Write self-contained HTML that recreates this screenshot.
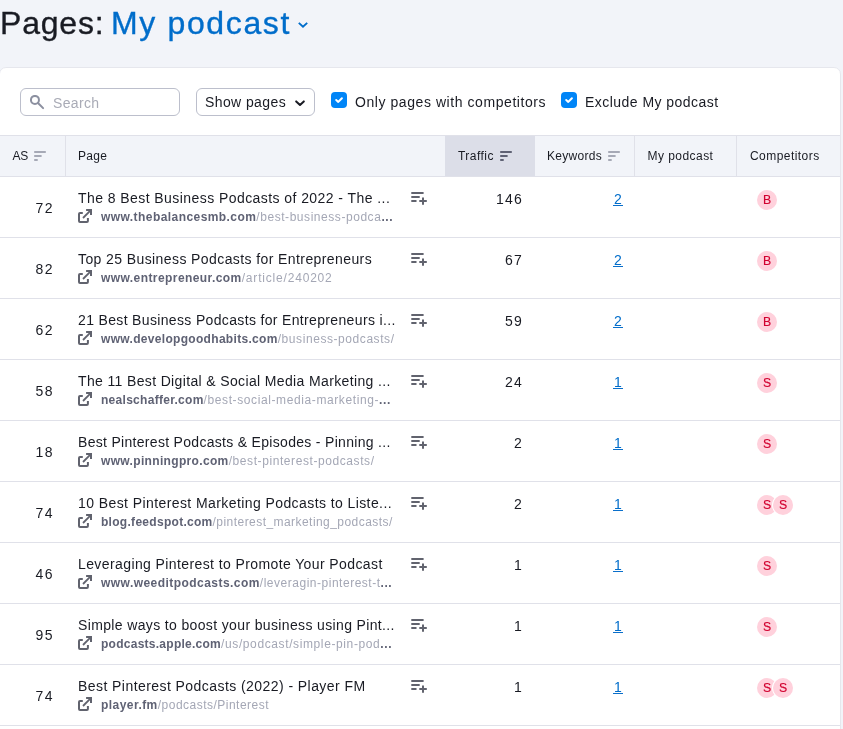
<!DOCTYPE html>
<html lang="en">
<head>
<meta charset="utf-8">
<title>Pages: My podcast</title>
<style>
*{box-sizing:border-box;margin:0;padding:0}
html,body{width:843px;height:729px;overflow:hidden}
body{will-change:transform;background:#f2f4f9;font-family:"Liberation Sans",Arial,sans-serif;color:#191b23;position:relative}
.title{position:absolute;left:0;top:0;height:50px;width:843px;font-weight:400;font-size:32px;line-height:36px;white-space:nowrap;-webkit-text-stroke:.35px}
.title .t1{position:absolute;left:0;top:5px;letter-spacing:.8px}
.title .t2{position:absolute;left:111px;top:5px;color:#006dca;letter-spacing:1.64px}
.title svg{position:absolute;left:298px;top:22px;overflow:visible}
.card{position:absolute;left:-1px;top:67px;width:842px;height:700px;background:#fff;border:1px solid #e6e7ed;border-radius:7px 7px 0 0}
.search{position:absolute;left:20px;top:20px;width:160px;height:28px;border:1px solid #bcbfcc;border-radius:6px;background:#fff}
.search svg{position:absolute;left:9px;top:6px}
.search span{position:absolute;left:32px;top:5px;font-size:14px;line-height:18px;color:#a9abb6;letter-spacing:.35px}
.select{position:absolute;left:196px;top:20px;width:119px;height:28px;border:1px solid #bcbfcc;border-radius:6px;background:#fff}
.select span{position:absolute;left:8px;top:4px;font-size:14px;line-height:18px;letter-spacing:.4px;white-space:nowrap}
.select svg{position:absolute;left:97px;top:11px}
.cb{position:absolute;top:24px;width:16px;height:16px;border-radius:4px;background:#0085f7}
.cb svg{position:absolute;left:3px;top:4px}
.lbl{position:absolute;top:25px;font-size:14px;line-height:18px;white-space:nowrap;letter-spacing:.4px}
.thead{position:absolute;left:0;top:67px;width:840px;height:42px;background:#f2f4f9;border-top:1px solid #e0e1e9;border-bottom:1px solid #e0e1e9;font-size:12px;line-height:16px}
.th{position:absolute;top:0;height:40px;border-left:1px solid #e0e1e9}
.th span{position:absolute;top:12px;white-space:nowrap;letter-spacing:.3px}
.th svg{position:absolute;top:15px}
.th.active{background:#dcdee8}
.row{position:absolute;left:0;width:840px;height:61px;border-bottom:1px solid #e0e1e9;background:#fff}
.as{position:absolute;left:0;width:54px;top:22px;text-align:right;font-size:14px;line-height:18px;letter-spacing:1.5px}
.pt{position:absolute;left:78px;top:12px;font-size:14px;line-height:18px;white-space:nowrap;letter-spacing:.45px}
.url{position:absolute;left:101px;top:32px;font-size:12px;line-height:16px;white-space:nowrap;color:#a4a7b5;letter-spacing:.3px}
.url b{color:#5f6274;font-weight:700;letter-spacing:.2px}
.url i{font-style:normal;color:#5f6274;font-weight:700}
.ext{position:absolute;left:78px;top:32px}
.add{position:absolute;left:411px;top:15px}
.tr{position:absolute;left:445px;width:78px;top:13px;text-align:right;font-size:14px;line-height:18px;letter-spacing:1.2px}
.kw{position:absolute;left:535px;width:88px;top:13px;text-align:right;font-size:14px;line-height:18px;color:#006dca}
.kw u{display:inline-block;position:relative;text-decoration:none;padding:0 1.1px}
.kw u::after{content:"";position:absolute;left:0;right:0;top:15px;height:1px;background:#0a6fcb}
.bd{position:absolute;top:13px;width:20px;height:20px;border-radius:50%;background:#ffd1dc;color:#d1002f;font-size:12.3px;line-height:21px;text-align:center;font-weight:400;-webkit-text-stroke:.15px #d1002f;box-shadow:0 0 0 1px #fff}
</style>
</head>
<body>
<h1 class="title"><span class="t1">Pages: </span><span class="t2">My podcast</span><svg width="11" height="7" viewBox="0 0 11 7"><path d="M0.8 0.9 L5 4.7 L9.2 0.9" fill="none" stroke="#006dca" stroke-width="1.9"/></svg></h1>
<div class="card">
<div class="search"><svg width="16" height="16" viewBox="0 0 16 16"><circle cx="4.95" cy="4.9" r="4" fill="none" stroke="#8c90a0" stroke-width="2"/><path d="M8 8 L13.1 13.1" stroke="#8c90a0" stroke-width="2" stroke-linecap="round"/></svg><span>Search</span></div>
<div class="select"><span>Show pages</span><svg width="12" height="8" viewBox="0 0 12 8"><path d="M2.2 1.4 L6 5 L9.8 1.4" fill="none" stroke="#191b23" stroke-width="2" stroke-linecap="round" stroke-linejoin="round"/></svg></div>
<div class="cb" style="left:331px"><svg width="10" height="8" viewBox="0 0 10 8"><path d="M2.2 4 L4.3 5.9 L7.9 2.2" fill="none" stroke="#fff" stroke-width="2" stroke-linecap="round" stroke-linejoin="round"/></svg></div>
<div class="lbl" style="left:355px;letter-spacing:.565px">Only pages with competitors</div>
<div class="cb" style="left:561px"><svg width="10" height="8" viewBox="0 0 10 8"><path d="M2.2 4 L4.3 5.9 L7.9 2.2" fill="none" stroke="#fff" stroke-width="2" stroke-linecap="round" stroke-linejoin="round"/></svg></div>
<div class="lbl" style="left:585px;letter-spacing:.46px">Exclude My podcast</div>
<div class="thead">
<div class="th" style="left:0;width:65px;border-left:0"><span style="left:12.5px;letter-spacing:-.3px">AS</span><svg style="left:34px" width="12" height="10" viewBox="0 0 12 10"><path d="M0.2 1h11.6M0.2 5h7.4M0.2 9h3.5" stroke="#a6a9b6" stroke-width="2"/></svg></div>
<div class="th" style="left:65px;width:380px"><span style="left:12px">Page</span></div>
<div class="th active" style="left:445px;width:90px;border-left:0"><span style="left:13px;letter-spacing:.47px">Traffic</span><svg style="left:55px" width="12" height="10" viewBox="0 0 12 10"><path d="M0.2 1h11.6M0.2 5h7.4M0.2 9h3.5" stroke="#5f6274" stroke-width="2"/></svg></div>
<div class="th" style="left:535px;width:100px;border-left:0"><span style="left:12px">Keywords</span><svg style="left:73px" width="12" height="10" viewBox="0 0 12 10"><path d="M0.2 1h11.6M0.2 5h7.4M0.2 9h3.5" stroke="#a6a9b6" stroke-width="2"/></svg></div>
<div class="th" style="left:634px;width:102px"><span style="left:12.5px;letter-spacing:.45px">My podcast</span></div>
<div class="th" style="left:736px;width:104px"><span style="left:13px;letter-spacing:.45px">Competitors</span></div>
</div>
<div class="row" style="top:109px"><span class="as">72</span><span class="pt" id="pt0" style="letter-spacing:0.432px">The 8 Best Business Podcasts of 2022 - The ...</span><svg class="ext" width="15" height="15" viewBox="0 0 15 15"><path d="M4.8 4.1H2a1 1 0 0 0-1 1v6.8a1 1 0 0 0 1 1h6.9a1 1 0 0 0 1-1V9.1" fill="none" stroke="#61636e" stroke-width="2"/><path d="M8.1 1h4.9v4.9" fill="none" stroke="#61636e" stroke-width="2"/><path d="M12.6 1.4L5 9" fill="none" stroke="#61636e" stroke-width="1.8"/></svg><span class="url"><b id="d0" style="letter-spacing:0.432px">www.thebalancesmb.com</b><span id="p0" style="letter-spacing:0.548px">/best-business-podca<i>...</i></span></span><svg class="add" width="17" height="14" viewBox="0 0 17 14"><path d="M0.3 1h12.3M0.3 5h8.4M0.3 9h5.2" stroke="#61636e" stroke-width="2"/><path d="M12 5.4v7.3M8.3 9h7.5" stroke="#61636e" stroke-width="2"/></svg><span class="tr">146</span><span class="kw"><u>2</u></span><span class="bd" style="left:757px;z-index:1">B</span></div>
<div class="row" style="top:170px"><span class="as">82</span><span class="pt" id="pt1" style="letter-spacing:0.406px">Top 25 Business Podcasts for Entrepreneurs</span><svg class="ext" width="15" height="15" viewBox="0 0 15 15"><path d="M4.8 4.1H2a1 1 0 0 0-1 1v6.8a1 1 0 0 0 1 1h6.9a1 1 0 0 0 1-1V9.1" fill="none" stroke="#61636e" stroke-width="2"/><path d="M8.1 1h4.9v4.9" fill="none" stroke="#61636e" stroke-width="2"/><path d="M12.6 1.4L5 9" fill="none" stroke="#61636e" stroke-width="1.8"/></svg><span class="url"><b id="d1" style="letter-spacing:0.423px">www.entrepreneur.com</b><span id="p1" style="letter-spacing:0.81px">/article/240202</span></span><svg class="add" width="17" height="14" viewBox="0 0 17 14"><path d="M0.3 1h12.3M0.3 5h8.4M0.3 9h5.2" stroke="#61636e" stroke-width="2"/><path d="M12 5.4v7.3M8.3 9h7.5" stroke="#61636e" stroke-width="2"/></svg><span class="tr">67</span><span class="kw"><u>2</u></span><span class="bd" style="left:757px;z-index:1">B</span></div>
<div class="row" style="top:231px"><span class="as">62</span><span class="pt" id="pt2" style="letter-spacing:0.343px">21 Best Business Podcasts for Entrepreneurs i...</span><svg class="ext" width="15" height="15" viewBox="0 0 15 15"><path d="M4.8 4.1H2a1 1 0 0 0-1 1v6.8a1 1 0 0 0 1 1h6.9a1 1 0 0 0 1-1V9.1" fill="none" stroke="#61636e" stroke-width="2"/><path d="M8.1 1h4.9v4.9" fill="none" stroke="#61636e" stroke-width="2"/><path d="M12.6 1.4L5 9" fill="none" stroke="#61636e" stroke-width="1.8"/></svg><span class="url"><b id="d2" style="letter-spacing:0.312px">www.developgoodhabits.com</b><span id="p2" style="letter-spacing:0.569px">/business-podcasts/</span></span><svg class="add" width="17" height="14" viewBox="0 0 17 14"><path d="M0.3 1h12.3M0.3 5h8.4M0.3 9h5.2" stroke="#61636e" stroke-width="2"/><path d="M12 5.4v7.3M8.3 9h7.5" stroke="#61636e" stroke-width="2"/></svg><span class="tr">59</span><span class="kw"><u>2</u></span><span class="bd" style="left:757px;z-index:1">B</span></div>
<div class="row" style="top:292px"><span class="as">58</span><span class="pt" id="pt3" style="letter-spacing:0.359px">The 11 Best Digital &amp; Social Media Marketing ...</span><svg class="ext" width="15" height="15" viewBox="0 0 15 15"><path d="M4.8 4.1H2a1 1 0 0 0-1 1v6.8a1 1 0 0 0 1 1h6.9a1 1 0 0 0 1-1V9.1" fill="none" stroke="#61636e" stroke-width="2"/><path d="M8.1 1h4.9v4.9" fill="none" stroke="#61636e" stroke-width="2"/><path d="M12.6 1.4L5 9" fill="none" stroke="#61636e" stroke-width="1.8"/></svg><span class="url"><b id="d3" style="letter-spacing:0.284px">nealschaffer.com</b><span id="p3" style="letter-spacing:0.601px">/best-social-media-marketing-<i>...</i></span></span><svg class="add" width="17" height="14" viewBox="0 0 17 14"><path d="M0.3 1h12.3M0.3 5h8.4M0.3 9h5.2" stroke="#61636e" stroke-width="2"/><path d="M12 5.4v7.3M8.3 9h7.5" stroke="#61636e" stroke-width="2"/></svg><span class="tr">24</span><span class="kw"><u>1</u></span><span class="bd" style="left:757px;z-index:1">S</span></div>
<div class="row" style="top:353px"><span class="as">18</span><span class="pt" id="pt4" style="letter-spacing:0.303px">Best Pinterest Podcasts &amp; Episodes - Pinning ...</span><svg class="ext" width="15" height="15" viewBox="0 0 15 15"><path d="M4.8 4.1H2a1 1 0 0 0-1 1v6.8a1 1 0 0 0 1 1h6.9a1 1 0 0 0 1-1V9.1" fill="none" stroke="#61636e" stroke-width="2"/><path d="M8.1 1h4.9v4.9" fill="none" stroke="#61636e" stroke-width="2"/><path d="M12.6 1.4L5 9" fill="none" stroke="#61636e" stroke-width="1.8"/></svg><span class="url"><b id="d4" style="letter-spacing:0.338px">www.pinningpro.com</b><span id="p4" style="letter-spacing:0.581px">/best-pinterest-podcasts/</span></span><svg class="add" width="17" height="14" viewBox="0 0 17 14"><path d="M0.3 1h12.3M0.3 5h8.4M0.3 9h5.2" stroke="#61636e" stroke-width="2"/><path d="M12 5.4v7.3M8.3 9h7.5" stroke="#61636e" stroke-width="2"/></svg><span class="tr">2</span><span class="kw"><u>1</u></span><span class="bd" style="left:757px;z-index:1">S</span></div>
<div class="row" style="top:414px"><span class="as">74</span><span class="pt" id="pt5" style="letter-spacing:0.414px">10 Best Pinterest Marketing Podcasts to Liste...</span><svg class="ext" width="15" height="15" viewBox="0 0 15 15"><path d="M4.8 4.1H2a1 1 0 0 0-1 1v6.8a1 1 0 0 0 1 1h6.9a1 1 0 0 0 1-1V9.1" fill="none" stroke="#61636e" stroke-width="2"/><path d="M8.1 1h4.9v4.9" fill="none" stroke="#61636e" stroke-width="2"/><path d="M12.6 1.4L5 9" fill="none" stroke="#61636e" stroke-width="1.8"/></svg><span class="url"><b id="d5" style="letter-spacing:0.289px">blog.feedspot.com</b><span id="p5" style="letter-spacing:0.446px">/pinterest_marketing_podcasts/</span></span><svg class="add" width="17" height="14" viewBox="0 0 17 14"><path d="M0.3 1h12.3M0.3 5h8.4M0.3 9h5.2" stroke="#61636e" stroke-width="2"/><path d="M12 5.4v7.3M8.3 9h7.5" stroke="#61636e" stroke-width="2"/></svg><span class="tr">2</span><span class="kw"><u>1</u></span><span class="bd" style="left:757px;z-index:1">S</span><span class="bd" style="left:773px;z-index:2">S</span></div>
<div class="row" style="top:475px"><span class="as">46</span><span class="pt" id="pt6" style="letter-spacing:0.398px">Leveraging Pinterest to Promote Your Podcast</span><svg class="ext" width="15" height="15" viewBox="0 0 15 15"><path d="M4.8 4.1H2a1 1 0 0 0-1 1v6.8a1 1 0 0 0 1 1h6.9a1 1 0 0 0 1-1V9.1" fill="none" stroke="#61636e" stroke-width="2"/><path d="M8.1 1h4.9v4.9" fill="none" stroke="#61636e" stroke-width="2"/><path d="M12.6 1.4L5 9" fill="none" stroke="#61636e" stroke-width="1.8"/></svg><span class="url"><b id="d6" style="letter-spacing:0.451px">www.weeditpodcasts.com</b><span id="p6" style="letter-spacing:0.515px">/leveragin-pinterest-t<i>...</i></span></span><svg class="add" width="17" height="14" viewBox="0 0 17 14"><path d="M0.3 1h12.3M0.3 5h8.4M0.3 9h5.2" stroke="#61636e" stroke-width="2"/><path d="M12 5.4v7.3M8.3 9h7.5" stroke="#61636e" stroke-width="2"/></svg><span class="tr">1</span><span class="kw"><u>1</u></span><span class="bd" style="left:757px;z-index:1">S</span></div>
<div class="row" style="top:536px"><span class="as">95</span><span class="pt" id="pt7" style="letter-spacing:0.36px">Simple ways to boost your business using Pint...</span><svg class="ext" width="15" height="15" viewBox="0 0 15 15"><path d="M4.8 4.1H2a1 1 0 0 0-1 1v6.8a1 1 0 0 0 1 1h6.9a1 1 0 0 0 1-1V9.1" fill="none" stroke="#61636e" stroke-width="2"/><path d="M8.1 1h4.9v4.9" fill="none" stroke="#61636e" stroke-width="2"/><path d="M12.6 1.4L5 9" fill="none" stroke="#61636e" stroke-width="1.8"/></svg><span class="url"><b id="d7" style="letter-spacing:0.26px">podcasts.apple.com</b><span id="p7" style="letter-spacing:0.611px">/us/podcast/simple-pin-pod<i>...</i></span></span><svg class="add" width="17" height="14" viewBox="0 0 17 14"><path d="M0.3 1h12.3M0.3 5h8.4M0.3 9h5.2" stroke="#61636e" stroke-width="2"/><path d="M12 5.4v7.3M8.3 9h7.5" stroke="#61636e" stroke-width="2"/></svg><span class="tr">1</span><span class="kw"><u>1</u></span><span class="bd" style="left:757px;z-index:1">S</span></div>
<div class="row" style="top:597px"><span class="as">74</span><span class="pt" id="pt8" style="letter-spacing:0.436px">Best Pinterest Podcasts (2022) - Player FM</span><svg class="ext" width="15" height="15" viewBox="0 0 15 15"><path d="M4.8 4.1H2a1 1 0 0 0-1 1v6.8a1 1 0 0 0 1 1h6.9a1 1 0 0 0 1-1V9.1" fill="none" stroke="#61636e" stroke-width="2"/><path d="M8.1 1h4.9v4.9" fill="none" stroke="#61636e" stroke-width="2"/><path d="M12.6 1.4L5 9" fill="none" stroke="#61636e" stroke-width="1.8"/></svg><span class="url"><b id="d8" style="letter-spacing:0.45px">player.fm</b><span id="p8" style="letter-spacing:0.483px">/podcasts/Pinterest</span></span><svg class="add" width="17" height="14" viewBox="0 0 17 14"><path d="M0.3 1h12.3M0.3 5h8.4M0.3 9h5.2" stroke="#61636e" stroke-width="2"/><path d="M12 5.4v7.3M8.3 9h7.5" stroke="#61636e" stroke-width="2"/></svg><span class="tr">1</span><span class="kw"><u>1</u></span><span class="bd" style="left:757px;z-index:1">S</span><span class="bd" style="left:773px;z-index:2">S</span></div>
</div>
</body>
</html>
